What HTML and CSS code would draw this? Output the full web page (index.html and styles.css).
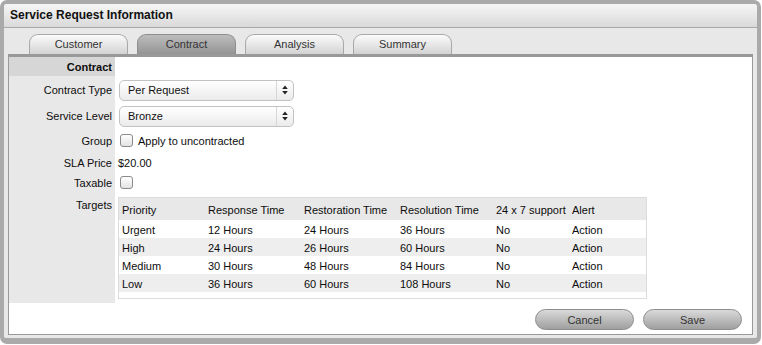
FILE: index.html
```html
<!DOCTYPE html>
<html lang="en">
<head>
    <meta charset="UTF-8">
    <title>Service Request Information</title>
    <link rel="stylesheet" href="styles.css">
</head>
<body>
    <div class="window">
        <div class="window-title">Service Request Information</div>
        <div class="window-body">
            <ul class="tabs">
                <li class="tab">Customer</li>
                <li class="tab active">Contract</li>
                <li class="tab">Analysis</li>
                <li class="tab">Summary</li>
            </ul>
            <div class="panel">
                <div class="form">
                    <div class="form-row section">
                        <div class="label">Contract</div>
                        <div class="field"></div>
                    </div>
                    <div class="form-row row-type">
                        <div class="label">Contract Type</div>
                        <div class="field">
                            <div class="select">
                                <span class="select-value">Per Request</span>
                                <span class="select-arrows">
                                    <svg width="6" height="10" viewBox="0 0 6 10"><path d="M3 0.5 L5.8 4 L0.2 4 Z M3 9.5 L5.8 6 L0.2 6 Z" fill="#222"/></svg>
                                </span>
                            </div>
                        </div>
                    </div>
                    <div class="form-row row-level">
                        <div class="label">Service Level</div>
                        <div class="field">
                            <div class="select">
                                <span class="select-value">Bronze</span>
                                <span class="select-arrows">
                                    <svg width="6" height="10" viewBox="0 0 6 10"><path d="M3 0.5 L5.8 4 L0.2 4 Z M3 9.5 L5.8 6 L0.2 6 Z" fill="#222"/></svg>
                                </span>
                            </div>
                        </div>
                    </div>
                    <div class="form-row row-group">
                        <div class="label">Group</div>
                        <div class="field"><span class="checkbox"></span>Apply to uncontracted</div>
                    </div>
                    <div class="form-row row-price">
                        <div class="label">SLA Price</div>
                        <div class="field value">$20.00</div>
                    </div>
                    <div class="form-row row-taxable">
                        <div class="label">Taxable</div>
                        <div class="field"><span class="checkbox"></span></div>
                    </div>
                    <div class="form-row row-targets">
                        <div class="label">Targets</div>
                        <div class="field">
                            <div class="targets">
                                <table class="targets-table">
                                    <colgroup>
                                        <col class="col-priority">
                                        <col class="col-time">
                                        <col class="col-time">
                                        <col class="col-time">
                                        <col class="col-support">
                                        <col>
                                    </colgroup>
                                    <tr>
                                        <th>Priority</th>
                                        <th>Response Time</th>
                                        <th>Restoration Time</th>
                                        <th>Resolution Time</th>
                                        <th>24 x 7 support</th>
                                        <th>Alert</th>
                                    </tr>
                                    <tr>
                                        <td>Urgent</td><td>12 Hours</td><td>24 Hours</td><td>36 Hours</td><td>No</td><td>Action</td>
                                    </tr>
                                    <tr class="alt">
                                        <td>High</td><td>24 Hours</td><td>26 Hours</td><td>60 Hours</td><td>No</td><td>Action</td>
                                    </tr>
                                    <tr>
                                        <td>Medium</td><td>30 Hours</td><td>48 Hours</td><td>84 Hours</td><td>No</td><td>Action</td>
                                    </tr>
                                    <tr class="alt">
                                        <td>Low</td><td>36 Hours</td><td>60 Hours</td><td>108 Hours</td><td>No</td><td>Action</td>
                                    </tr>
                                </table>
                            </div>
                        </div>
                    </div>
                </div>
                <div class="actions">
                    <button type="button">Cancel</button>
                    <button type="button">Save</button>
                </div>
            </div>
        </div>
    </div>
</body>
</html>
```

FILE: styles.css
```css
body {
    margin: 0;
    font-family: "Liberation Sans", Arial, sans-serif;
    font-size: 11px;
    line-height: 14px;
    color: #0d0d0d;
    background-color: #fff;
}
.window {
    width: 761px;
    box-sizing: border-box;
    border: 4px solid #aaa;
    border-bottom-width: 6px;
    border-radius: 7px;
    background-color: #e8e8e8;
    padding-bottom: 3px;
}
.window-title {
    height: 23px;
    line-height: 23px;
    padding-left: 6px;
    font-size: 12px;
    font-weight: bold;
    color: #111;
    background: linear-gradient(#f6f6f6, #d9d9d9);
    border-bottom: 1px solid #a8a8a8;
    border-radius: 3px 3px 0 0;
}
.window-body {
    padding: 6px 4px 0;
}
.tabs {
    list-style: none;
    margin: 0;
    padding: 0 0 0 21px;
    display: flex;
    gap: 9px;
}
.tab {
    width: 99px;
    height: 20px;
    box-sizing: border-box;
    line-height: 19px;
    text-align: center;
    color: #333;
    border: 1px solid #a8a8a8;
    border-bottom: none;
    border-radius: 9px 9px 0 0;
    background: linear-gradient(#fbfbfb, #d3d3d3);
}
.tab.active {
    border-color: #8e8e8e;
    background: linear-gradient(#bdbdbd, #949494);
}
.panel {
    background-color: #fff;
    border: 1px solid #999;
    border-top: 3px solid #999;
}
.form-row {
    display: grid;
    grid-template-columns: 106px 1fr;
}
.label {
    display: flex;
    align-items: center;
    justify-content: flex-end;
    padding-right: 3px;
    white-space: nowrap;
    background-color: #e8e8e8;
}
.field {
    display: flex;
    align-items: center;
    padding-left: 4px;
}
.field.value {
    padding-left: 3px;
}
.section {
    height: 19px;
}
.section .label {
    font-weight: bold;
    background-color: #d6d6d6;
}
.row-type {
    height: 28px;
}
.row-level {
    height: 24px;
}
.row-group {
    height: 25px;
}
.row-price {
    height: 19px;
}
.row-taxable {
    height: 21px;
}
.row-targets {
    height: 110px;
}
.row-targets .label {
    align-items: flex-start;
    padding-top: 5px;
}
.row-targets .field {
    align-items: flex-start;
    padding: 4px 0 0 3px;
}
.select {
    display: flex;
    align-items: center;
    width: 175px;
    height: 21px;
    box-sizing: border-box;
    border: 1px solid #c2c2c2;
    border-radius: 5px;
    background: linear-gradient(#fff, #ebebeb);
}
.select-value {
    flex: 1;
    padding-left: 8px;
    color: #111;
}
.select-arrows {
    width: 16px;
    height: 100%;
    display: flex;
    align-items: center;
    justify-content: center;
    border-left: 1px solid #d6d6d6;
}
.checkbox {
    display: inline-block;
    width: 13px;
    height: 13px;
    box-sizing: border-box;
    margin: 0 5px 0 1px;
    border: 1px solid #8a8a8a;
    border-radius: 3px;
    background: linear-gradient(#fff, #e3e3e3);
}
.targets {
    width: 529px;
    box-sizing: border-box;
    border: 1px solid #dcdcdc;
    padding-bottom: 6px;
}
.targets-table {
    width: 100%;
    table-layout: fixed;
    border-collapse: collapse;
}
.targets-table th {
    text-align: left;
    font-weight: normal;
    height: 21px;
    padding: 1px 0 0 3px;
    white-space: nowrap;
    background-color: #e8e8e8;
}
.targets-table td {
    height: 17px;
    padding: 1px 0 0 3px;
    white-space: nowrap;
}
.targets-table tr.alt td {
    background-color: #eee;
}
.col-priority {
    width: 86px;
}
.col-time {
    width: 96px;
}
.col-support {
    width: 76px;
}
.actions {
    display: flex;
    justify-content: flex-end;
    gap: 9px;
    padding: 6px 10px 4px;
}
.actions button {
    width: 99px;
    height: 21px;
    font-family: "Liberation Sans", Arial, sans-serif;
    font-size: 11px;
    color: #333;
    border: 1px solid #8c8c8c;
    border-radius: 11px;
    background: linear-gradient(#dadada, #9f9f9f);
    cursor: pointer;
}
```
